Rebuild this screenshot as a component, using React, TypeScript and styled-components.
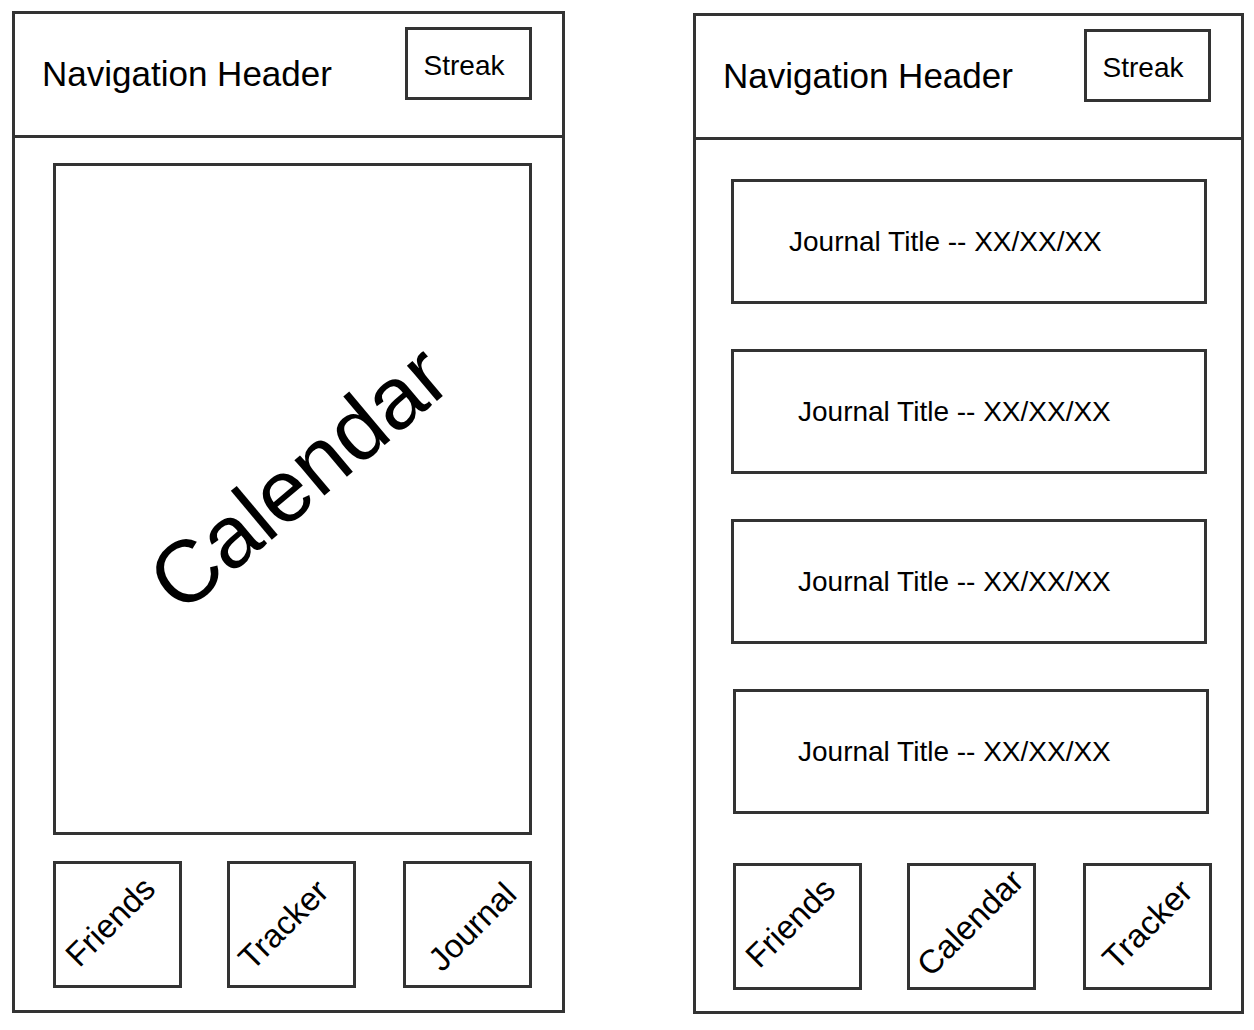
import React from "react";
import styled, { createGlobalStyle } from "styled-components";

const GlobalStyle = createGlobalStyle`
  html, body {
    margin: 0;
    padding: 0;
    background: #ffffff;
  }
  body {
    font-family: "Liberation Sans", Arial, sans-serif;
    color: #000000;
  }
  * { box-sizing: border-box; }
`;

const LINE = "#333333";

const Page = styled.div`
  width: 1254px;
  height: 1030px;
  display: flex;
  align-items: flex-start;
  gap: 128px;
  padding: 11px 0 0 12px;
  overflow: hidden;
`;

const Phone = styled.section<{ $w: number; $h: number; $top: number }>`
  width: ${(p) => p.$w}px;
  height: ${(p) => p.$h}px;
  margin-top: ${(p) => p.$top}px;
  border: 3px solid ${LINE};
  display: flex;
  flex-direction: column;
  background: #fff;
`;

const Header = styled.header`
  height: 124px;
  flex-shrink: 0;
  display: flex;
  align-items: center;
  justify-content: space-between;
  padding: 0 30px 2px 27px;
  border-bottom: 3px solid ${LINE};
`;

const HeaderTitle = styled.h1`
  margin: 0;
  font-size: 35px;
  font-weight: 400;
  line-height: 1;
`;

const StreakBox = styled.div`
  align-self: flex-start;
  margin-top: 13px;
  width: 127px;
  height: 73px;
  border: 3px solid ${LINE};
  display: flex;
  align-items: center;
  justify-content: center;
  padding-right: 9px;
  padding-top: 4px;
  font-size: 28px;
  line-height: 1;
`;

const CalendarBody = styled.main`
  flex: 1;
  display: flex;
  flex-direction: column;
  gap: 26px;
  padding: 25px 30px 22px 38px;
`;

const CalendarBox = styled.div`
  flex: 1;
  border: 3px solid ${LINE};
  display: flex;
  align-items: center;
  justify-content: center;
  overflow: hidden;
`;

const CalendarLabel = styled.span`
  font-size: 88px;
  line-height: 1;
  white-space: nowrap;
  transform: translate(6px, -21px) rotate(-40deg);
`;

const JournalBody = styled.main`
  flex: 1;
  display: flex;
  flex-direction: column;
  padding: 39px 34px 21px 35px;
`;

const JournalList = styled.div`
  display: flex;
  flex-direction: column;
  gap: 45px;
`;

const JournalEntry = styled.div<{ $indent: number; $nudge: number }>`
  height: 125px;
  border: 3px solid ${LINE};
  display: flex;
  align-items: center;
  padding-left: ${(p) => p.$indent}px;
  margin: 0 ${(p) => -p.$nudge}px 0 ${(p) => p.$nudge}px;
  font-size: 28px;
  line-height: 1;
  white-space: nowrap;
`;

const NavRow = styled.nav<{ $pushDown?: boolean; $ml?: number; $mr?: number }>`
  height: 127px;
  flex-shrink: 0;
  display: flex;
  justify-content: space-between;
  margin-top: ${(p) => (p.$pushDown ? "auto" : "0")};
  margin-left: ${(p) => p.$ml ?? 0}px;
  margin-right: ${(p) => p.$mr ?? 0}px;
`;

const NavButton = styled.div<{ $shift: number }>`
  width: 129px;
  height: 127px;
  border: 3px solid ${LINE};
  display: flex;
  align-items: center;
  justify-content: center;
  margin-left: ${(p) => p.$shift}px;
`;

const NavLabel = styled.span<{ $dx: number; $dy: number }>`
  font-size: 33px;
  line-height: 1;
  white-space: nowrap;
  transform: translate(${(p) => p.$dx}px, ${(p) => p.$dy}px) rotate(-45deg);
`;

type NavItem = { label: string; dx: number; dy: number; shift: number };

const leftNav: NavItem[] = [
  { label: "Friends", dx: -7, dy: -3, shift: 0 },
  { label: "Tracker", dx: -8, dy: 0, shift: -3 },
  { label: "Journal", dx: 5, dy: 2, shift: 0 },
];

const rightNav: NavItem[] = [
  { label: "Friends", dx: -7, dy: -4, shift: 0 },
  { label: "Calendar", dx: -1, dy: -4, shift: -3 },
  { label: "Tracker", dx: 0, dy: -2, shift: 0 },
];

const entries = [
  { indent: 55, nudge: 0 },
  { indent: 64, nudge: 0 },
  { indent: 64, nudge: 0 },
  { indent: 62, nudge: 2 },
];

const TopBar = () => (
  <Header>
    <HeaderTitle>Navigation Header</HeaderTitle>
    <StreakBox>Streak</StreakBox>
  </Header>
);

const BottomNav = ({
  items,
  pushDown,
  ml,
  mr,
}: {
  items: NavItem[];
  pushDown?: boolean;
  ml?: number;
  mr?: number;
}) => (
  <NavRow $pushDown={pushDown} $ml={ml} $mr={mr}>
    {items.map((it) => (
      <NavButton key={it.label} $shift={it.shift}>
        <NavLabel $dx={it.dx} $dy={it.dy}>
          {it.label}
        </NavLabel>
      </NavButton>
    ))}
  </NavRow>
);

export default function App() {
  return (
    <>
      <GlobalStyle />
      <Page>
        <Phone $w={553} $h={1002} $top={0}>
          <TopBar />
          <CalendarBody>
            <CalendarBox>
              <CalendarLabel>Calendar</CalendarLabel>
            </CalendarBox>
            <BottomNav items={leftNav} />
          </CalendarBody>
        </Phone>
        <Phone $w={551} $h={1001} $top={2}>
          <TopBar />
          <JournalBody>
            <JournalList>
              {entries.map((e, i) => (
                <JournalEntry key={i} $indent={e.indent} $nudge={e.nudge}>
                  Journal Title -- XX/XX/XX
                </JournalEntry>
              ))}
            </JournalList>
            <BottomNav items={rightNav} pushDown ml={2} mr={-5} />
          </JournalBody>
        </Phone>
      </Page>
    </>
  );
}
